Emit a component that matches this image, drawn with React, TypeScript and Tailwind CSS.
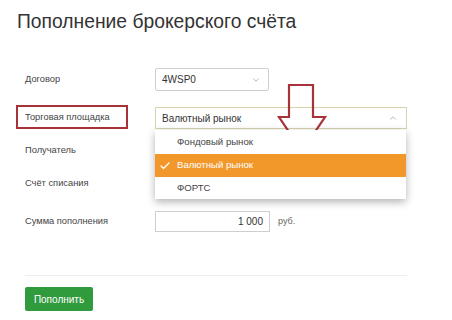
import { ChevronDown, ChevronUp, Check } from 'lucide-react';

const Label = ({ children }: { children: React.ReactNode }) => (
  <div className="w-[130px] shrink-0 text-[9.3px] text-[#444]">{children}</div>
);

const ArrowMark = () => (
  <svg className="absolute left-[276px] top-[84px]" width="52" height="70" viewBox="0 0 52 70">
    <path
      d="M13 1 H37 V33 H49 L26 67 L3 33 H13 Z"
      fill="none"
      stroke="#a8323a"
      strokeWidth="2.2"
      strokeLinejoin="miter"
    />
  </svg>
);

export default function App() {
  return (
    <div className="relative w-[452px] h-[320px] overflow-hidden bg-white text-[#333] font-['Liberation_Sans',Arial,sans-serif]">
      <h1 className="pl-[17px] pt-[10px] text-[19.3px] leading-[24px] text-[#333]">
        Пополнение брокерского счёта
      </h1>

      <div className="mt-[34px] pl-[25px]">
        <div className="flex items-center h-[23px]">
          <Label>Договор</Label>
          <div className="flex items-center justify-between w-[114px] h-[23px] border border-[#cfcfcf] rounded-[2px] pl-[6px] pr-[7px] text-[10px] text-[#333]">
            <span>4WSP0</span>
            <ChevronDown size={10} strokeWidth={1.5} className="text-[#888]" />
          </div>
        </div>

        <div className="flex items-center h-[22px] mt-[16px]">
          <Label>
            <span className="relative">
              Торговая площадка
              <span className="absolute -left-[9px] -right-[18px] -top-[7px] -bottom-[7px] border-2 border-[#a8323a]" />
            </span>
          </Label>
          <div className="relative">
            <div className="flex items-center justify-between w-[252px] h-[22px] border border-[#d6d3ae] pl-[6px] pr-[8px] text-[10px] text-[#333]">
              <span>Валютный рынок</span>
              <ChevronUp size={10} strokeWidth={1.5} className="text-[#888]" />
            </div>
            <div className="absolute left-0 top-[23px] z-10 w-[251px] bg-white shadow-[0_3px_8px_rgba(0,0,0,0.3)] text-[9.6px]">
              <div className="flex items-center h-[24px] pl-[22px] text-[#444]">Фондовый рынок</div>
              <div className="flex items-center h-[23px] bg-[#f2982b] text-white">
                <Check size={12} strokeWidth={2.5} className="ml-[4px] mr-[6px]" />
                <span>Валютный рынок</span>
              </div>
              <div className="flex items-center h-[22px] pl-[22px] text-[#444]">ФОРТС</div>
            </div>
          </div>
        </div>

        <div className="flex items-center h-[22px] mt-[11px]">
          <Label>Получатель</Label>
        </div>

        <div className="flex items-center h-[22px] mt-[11px]">
          <Label>Счёт списания</Label>
        </div>

        <div className="flex items-center h-[21px] mt-[16px]">
          <Label>Сумма пополнения</Label>
          <div className="flex items-center justify-end w-[115px] h-[21px] border border-[#cfcfcf] pr-[6px] text-[10px] text-[#333]">
            1 000
          </div>
          <span className="ml-[8px] text-[9px] text-[#666]">руб.</span>
        </div>

        <div className="mt-[43px] w-[382px] border-t border-[#eeeeee]" />

        <button className="mt-[11px] w-[68px] h-[24px] rounded-[2px] bg-[#2f9b3d] text-white text-[10px]">
          Пополнить
        </button>
      </div>

      <ArrowMark />
    </div>
  );
}
